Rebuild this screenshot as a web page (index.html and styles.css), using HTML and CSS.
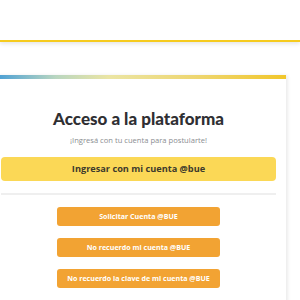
FILE: index.html
```html
<!DOCTYPE html>
<html lang="es">
<head>
  <meta charset="UTF-8">
  <title>Acceso a la plataforma</title>
  <meta name="viewport" content="width=device-width, initial-scale=1.0">
  <link rel="stylesheet" href="styles.css">
</head>
<body>
  <header class="top-bar"></header>
  <main class="login-card">
    <div class="card-stripe"></div>
    <div class="card-body">
      <h1 class="card-title">Acceso a la plataforma</h1>
      <p class="card-subtitle">¡Ingresá con tu cuenta para postularte!</p>
      <a class="btn-main" href="#">Ingresar con mi cuenta @bue</a>
      <hr class="divider">
      <div class="alt-actions">
        <a class="btn-alt" href="#">Solicitar Cuenta @BUE</a>
        <a class="btn-alt" href="#">No recuerdo mi cuenta @BUE</a>
        <a class="btn-alt" href="#">No recuerdo la clave de mi cuenta @BUE</a>
      </div>
    </div>
  </main>
</body>
</html>
```

FILE: styles.css
```css
body {
  margin: 0;
  padding: 0;
  background: #fff;
  font-family: 'Open Sans', Arial, sans-serif;
  overflow: hidden;
}
.top-bar {
  height: 40px;
  border-bottom: 2px solid #f6cb1e;
  box-shadow: 0 2px 4px rgba(0,0,0,0.10);
  background: #fff;
}
.login-card {
  margin: 33px 0 0 -9px;
  width: 295px;
  background: #fff;
  box-shadow: 2px 0 3px rgba(0,0,0,0.08);
}
.card-stripe {
  height: 4px;
  background: linear-gradient(to right, #4a9fd5 2%, #b9d6c0 22%, #ebe5a4 40%, #eed670 70%, #f1c62a 100%);
}
.card-body {
  padding: 30px 10px 20px 10px;
  text-align: center;
}
.card-title {
  margin: 0;
  font-family: Lato, 'Open Sans', sans-serif;
  font-weight: 900;
  font-size: 17px;
  color: #2f2f33;
  line-height: 20px;
}
.card-subtitle {
  margin: 5px 0 0 0;
  font-size: 7.6px;
  color: #8a8d91;
  line-height: 12px;
}
.btn-main {
  display: block;
  margin-top: 11px;
  height: 24px;
  line-height: 24px;
  background: #fbd856;
  border-radius: 4px;
  color: #3d3a2c;
  font-weight: 700;
  font-size: 9.2px;
  text-decoration: none;
}
.divider {
  margin: 12px 0 0 0;
  border: none;
  border-top: 2px solid #efefef;
}
.alt-actions {
  display: flex;
  flex-direction: column;
  align-items: center;
  gap: 12px;
  margin-top: 12px;
}
.btn-alt {
  display: block;
  width: 163px;
  height: 19px;
  line-height: 19px;
  background: #f2a333;
  border-radius: 3px;
  color: #fff;
  font-weight: 700;
  font-size: 7.1px;
  text-decoration: none;
}
```
